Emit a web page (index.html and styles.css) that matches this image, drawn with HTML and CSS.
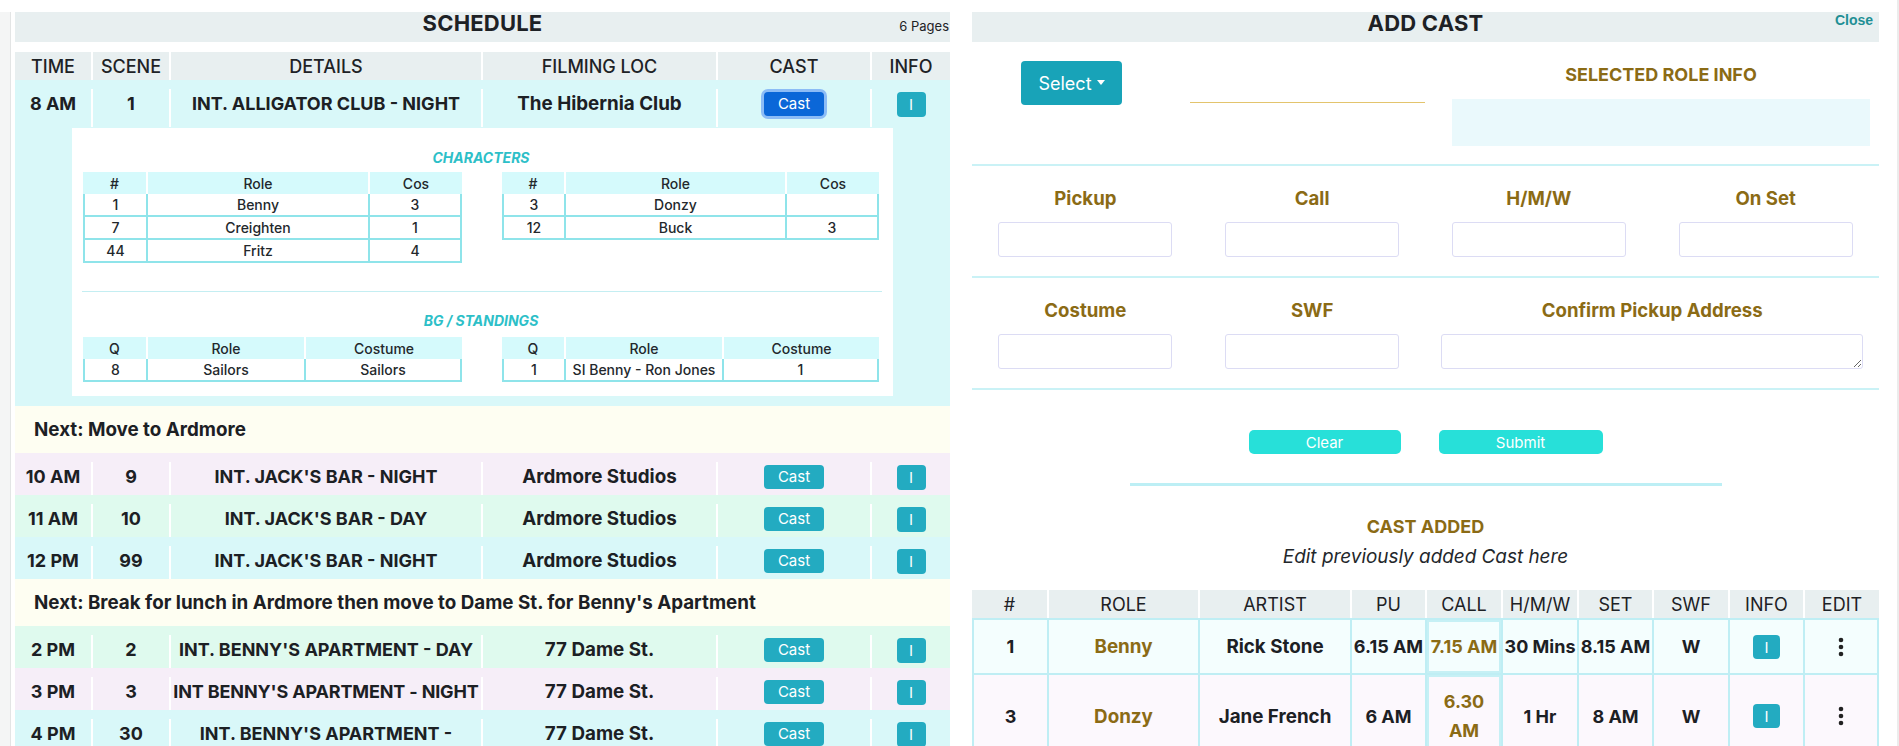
FILE: index.html
```html
<!DOCTYPE html>
<html lang="en">
<head>
<meta charset="utf-8">
<title>Schedule / Add Cast</title>
<link rel="stylesheet" href="styles.css">
</head>
<body>
<div class="page">
  <div class="gutter"></div>

  <section class="schedule">
    <header class="bar">
      <span></span>
      <h1 class="bar-title">SCHEDULE</h1>
      <span class="bar-aside pages">6 Pages</span>
    </header>

    <div class="srow shead">
      <div class="sc">TIME</div>
      <div class="sc">SCENE</div>
      <div class="sc">DETAILS</div>
      <div class="sc">FILMING LOC</div>
      <div class="sc">CAST</div>
      <div class="sc">INFO</div>
    </div>

    <div class="scene cyan">
      <div class="srow sdata open">
        <div class="sc">8 AM</div>
        <div class="sc">1</div>
        <div class="sc">INT. ALLIGATOR CLUB - NIGHT</div>
        <div class="sc loc">The Hibernia Club</div>
        <div class="sc"><button class="btn-cast focused">Cast</button></div>
        <div class="sc"><button class="btn-i">I</button></div>
      </div>
      <div class="details">
        <div class="dbox">
          <h3 class="dtitle">CHARACTERS</h3>
          <div class="dtables">
            <div class="mini chars-l">
              <div class="mh">#</div><div class="mh">Role</div><div class="mh">Cos</div>
              <div class="md">1</div><div class="md">Benny</div><div class="md">3</div>
              <div class="md">7</div><div class="md">Creighten</div><div class="md">1</div>
              <div class="md">44</div><div class="md">Fritz</div><div class="md">4</div>
            </div>
            <div class="mini chars-r">
              <div class="mh">#</div><div class="mh">Role</div><div class="mh">Cos</div>
              <div class="md">3</div><div class="md">Donzy</div><div class="md"></div>
              <div class="md">12</div><div class="md">Buck</div><div class="md">3</div>
            </div>
          </div>
          <hr class="ddiv">
          <h3 class="dtitle bgt">BG / STANDINGS</h3>
          <div class="dtables bgtables">
            <div class="mini bg-l">
              <div class="mh">Q</div><div class="mh">Role</div><div class="mh">Costume</div>
              <div class="md">8</div><div class="md">Sailors</div><div class="md">Sailors</div>
            </div>
            <div class="mini bg-r">
              <div class="mh">Q</div><div class="mh">Role</div><div class="mh">Costume</div>
              <div class="md">1</div><div class="md">SI Benny - Ron Jones</div><div class="md">1</div>
            </div>
          </div>
        </div>
      </div>
    </div>

    <div class="note">Next: Move to Ardmore</div>

    <div class="srow sdata lavender">
      <div class="sc">10 AM</div><div class="sc">9</div><div class="sc">INT. JACK'S BAR - NIGHT</div><div class="sc loc">Ardmore Studios</div>
      <div class="sc"><button class="btn-cast">Cast</button></div><div class="sc"><button class="btn-i">I</button></div>
    </div>
    <div class="srow sdata mint">
      <div class="sc">11 AM</div><div class="sc">10</div><div class="sc">INT. JACK'S BAR - DAY</div><div class="sc loc">Ardmore Studios</div>
      <div class="sc"><button class="btn-cast">Cast</button></div><div class="sc"><button class="btn-i">I</button></div>
    </div>
    <div class="srow sdata cyan">
      <div class="sc">12 PM</div><div class="sc">99</div><div class="sc">INT. JACK'S BAR - NIGHT</div><div class="sc loc">Ardmore Studios</div>
      <div class="sc"><button class="btn-cast">Cast</button></div><div class="sc"><button class="btn-i">I</button></div>
    </div>

    <div class="note">Next: Break for lunch in Ardmore then move to Dame St. for Benny's Apartment</div>

    <div class="srow sdata mint">
      <div class="sc">2 PM</div><div class="sc">2</div><div class="sc">INT. BENNY'S APARTMENT - DAY</div><div class="sc loc">77 Dame St.</div>
      <div class="sc"><button class="btn-cast">Cast</button></div><div class="sc"><button class="btn-i">I</button></div>
    </div>
    <div class="srow sdata lavender">
      <div class="sc">3 PM</div><div class="sc">3</div><div class="sc tight">INT BENNY'S APARTMENT - NIGHT</div><div class="sc loc">77 Dame St.</div>
      <div class="sc"><button class="btn-cast">Cast</button></div><div class="sc"><button class="btn-i">I</button></div>
    </div>
    <div class="srow sdata cyan">
      <div class="sc">4 PM</div><div class="sc">30</div><div class="sc">INT. BENNY'S APARTMENT - NIGHT</div><div class="sc loc">77 Dame St.</div>
      <div class="sc"><button class="btn-cast">Cast</button></div><div class="sc"><button class="btn-i">I</button></div>
    </div>
  </section>

  <section class="addcast">
    <header class="bar">
      <span></span>
      <h1 class="bar-title">ADD CAST</h1>
      <a class="bar-aside close">Close</a>
    </header>

    <div class="sel-row">
      <button class="btn-select">Select<span class="caret"></span></button>
      <input class="sel-line" type="text" aria-label="Role">
      <div class="role-info">
        <h2 class="gold-title">SELECTED ROLE INFO</h2>
        <div class="info-box"></div>
      </div>
    </div>

    <div class="form-row">
      <div class="field"><label class="flabel">Pickup</label><input class="finput" type="text"></div>
      <div class="field"><label class="flabel">Call</label><input class="finput" type="text"></div>
      <div class="field"><label class="flabel">H/M/W</label><input class="finput" type="text"></div>
      <div class="field"><label class="flabel">On Set</label><input class="finput" type="text"></div>
    </div>

    <div class="form-row">
      <div class="field"><label class="flabel">Costume</label><input class="finput" type="text"></div>
      <div class="field"><label class="flabel">SWF</label><input class="finput" type="text"></div>
      <div class="field wide"><label class="flabel">Confirm Pickup Address</label><textarea class="farea"></textarea></div>
    </div>

    <div class="actions">
      <button class="btn-act clear">Clear</button>
      <button class="btn-act submit">Submit</button>
    </div>
    <hr class="thick">

    <h2 class="gold-title added">CAST ADDED</h2>
    <p class="sub">Edit previously added Cast here</p>

    <div class="ctable">
      <div class="ct-row ct-head">
        <div class="cth">#</div><div class="cth">ROLE</div><div class="cth">ARTIST</div><div class="cth">PU</div><div class="cth">CALL</div>
        <div class="cth">H/M/W</div><div class="cth">SET</div><div class="cth">SWF</div><div class="cth">INFO</div><div class="cth">EDIT</div>
      </div>
      <div class="ct-row ct-body first r1">
        <div class="ctd">1</div><div class="ctd gold name">Benny</div><div class="ctd name">Rick Stone</div><div class="ctd">6.15 AM</div><div class="ctd gold hl">7.15 AM</div>
        <div class="ctd">30 Mins</div><div class="ctd">8.15 AM</div><div class="ctd">W</div>
        <div class="ctd"><button class="btn-i">I</button></div>
        <div class="ctd"><svg class="kebab" width="6" height="20" viewBox="0 0 6 20"><circle cx="3" cy="3" r="2.3"/><circle cx="3" cy="10" r="2.3"/><circle cx="3" cy="17" r="2.3"/></svg></div>
      </div>
      <div class="ct-row ct-body r2">
        <div class="ctd">3</div><div class="ctd gold name">Donzy</div><div class="ctd name">Jane French</div><div class="ctd">6 AM</div><div class="ctd gold hl">6.30<br>AM</div>
        <div class="ctd">1 Hr</div><div class="ctd">8 AM</div><div class="ctd">W</div>
        <div class="ctd"><button class="btn-i">I</button></div>
        <div class="ctd"><svg class="kebab" width="6" height="20" viewBox="0 0 6 20"><circle cx="3" cy="3" r="2.3"/><circle cx="3" cy="10" r="2.3"/><circle cx="3" cy="17" r="2.3"/></svg></div>
      </div>
    </div>
  </section>

  <div class="edge"></div>
</div>
</body>
</html>
```

FILE: styles.css
```css
* { box-sizing: border-box; margin: 0; padding: 0; }
html, body { width: 1899px; height: 746px; overflow: hidden; background: #fff; }
body { font-family: Inter, "Liberation Sans", sans-serif; color: #1e2226; }

.page { display: flex; align-items: flex-start; height: 746px; }

.gutter { width: 11px; height: 734px; margin-top: 12px; background: #f4f5f5; border-right: 1px solid #e3e5e5; flex: none; }
.edge { width: 2px; height: 746px; margin-left: auto; background: #ececec; flex: none; }

/* ---------- shared header bar ---------- */
.bar { display: grid; grid-template-columns: 1fr auto 1fr; height: 30px; background: #e8eff0; }
.bar-title { font-size: 22px; font-weight: 700; line-height: 22px; color: #1d2125; letter-spacing: 0.2px; }
.bar-aside { justify-self: end; align-self: start; }
.pages { font-size: 13px; line-height: 16px; padding-top: 6px; padding-right: 1px; color: #1e2226; }
.close { font-family: "Liberation Sans", Arial, sans-serif; font-weight: 700; font-size: 14px; line-height: 16px; color: #1f8f95; padding-right: 6px; cursor: pointer; }

/* ---------- schedule ---------- */
.schedule { width: 935px; margin-left: 4px; padding-top: 12px; flex: none; }

.srow { display: grid; grid-template-columns: 76px 78px 312px 235px 154px 80px; }
.srow .sc + .sc { border-left: 2px solid #fff; }

.shead { margin-top: 10px; height: 28px; }
.shead .sc { background: #e8eff0; display: flex; align-items: center; justify-content: center; font-size: 18px; font-weight: 500; }

.sdata { padding-top: 9px; min-height: 42px; }
.sdata .sc { min-height: 33px; padding: 1px 0 5px; display: flex; align-items: flex-start; justify-content: center; text-align: center; font-size: 18px; font-weight: 700; line-height: 27px; color: #1c2024; }
.sdata .sc.loc { font-size: 18.8px; }
.sdata .sc.tight { letter-spacing: -0.15px; }
.sdata.open { min-height: 47px; }

.cyan { background: #d9f8f9; }
.lavender { background: #f6eef8; }
.mint { background: #dffaee; }

.btn-cast { width: 60px; height: 24px; margin-top: 2px; border: 0; border-radius: 4px; background: #23abc1; color: #fff; font-family: Inter, sans-serif; font-size: 15px; line-height: 24px; letter-spacing: 0; }
.btn-cast.focused { background: #0b67d8; box-shadow: 0 0 0 3px #8cbcf6; }
.btn-i { width: 29px; height: 25px; margin-top: 2px; border: 0; border-radius: 4px; background: #23abc1; color: #fff; font-family: Inter, sans-serif; font-size: 15px; line-height: 25px; }

.details { padding: 1px 57px 10px 57px; }
.dbox { background: #fff; height: 268px; padding: 21px 14px 0 11px; }
.dtitle { font-size: 14px; font-weight: 700; font-style: italic; line-height: 18px; text-align: center; color: #2dbfc8; }
.dtables { display: flex; gap: 40px; margin-top: 5px; }
.ddiv { border: 0; border-top: 1px solid #c4eef2; margin: 28px -3px 0 -1px; }
.bgt { margin-top: 20px; }
.bgtables { margin-top: 7px; }

.mini { display: grid; align-content: start; font-size: 14px; font-weight: 500; color: #23282c; }
.chars-l { grid-template-columns: 63px 222px 94px; }
.chars-r { grid-template-columns: 62px 221px 94px; }
.bg-l { grid-template-columns: 63px 158px 158px; }
.bg-r { grid-template-columns: 62px 158px 157px; }
.mh { height: 22px; background: #d5fafc; display: flex; align-items: center; justify-content: center; }
.mh + .mh { border-left: 2px solid #fff; }
.md { height: 23px; border-left: 2px solid #8fe4ea; border-bottom: 2px solid #8fe4ea; display: flex; align-items: center; justify-content: center; white-space: nowrap; }
.md:nth-child(3n) { border-right: 2px solid #8fe4ea; }

.note { height: 47px; background: #fefef2; display: flex; align-items: center; padding-left: 19px; font-size: 18.8px; font-weight: 700; color: #1c2024; }

/* ---------- add cast ---------- */
.addcast { width: 907px; margin-left: 22px; padding-top: 12px; flex: none; }

.sel-row { display: flex; align-items: flex-start; height: 124px; border-bottom: 2px solid #caf2f6; }
.btn-select { width: 101px; height: 44px; margin: 19px 0 0 49px; border: 0; border-radius: 4px; background: #18a3b8; color: #fff; font-family: Inter, sans-serif; font-size: 18px; display: flex; align-items: center; justify-content: center; gap: 5px; }
.caret { width: 0; height: 0; border-top: 5px solid #fff; border-left: 4px solid transparent; border-right: 4px solid transparent; margin-top: -2px; }
.sel-line { width: 235px; height: 34px; margin: 27px 0 0 68px; border: 0; border-bottom: 1px solid #e3c46d; background: transparent; outline: none; }
.role-info { width: 418px; margin: 22px 0 0 27px; }
.gold-title { font-size: 18px; font-weight: 700; line-height: 22px; text-align: center; color: #8b6b15; }
.info-box { height: 47px; margin-top: 13px; background: #eaf9fc; }

.form-row { display: grid; grid-template-columns: repeat(4, 1fr); padding: 21px 0 19px; border-bottom: 2px solid #caf2f6; }
.field { display: flex; flex-direction: column; align-items: center; }
.field.wide { grid-column: span 2; }
.flabel { font-size: 18.6px; font-weight: 700; line-height: 22px; color: #8b6b15; margin-bottom: 13px; }
.finput { width: 174px; height: 35px; border: 1px solid #dcdcf4; border-radius: 3px; background: #fff; }
.farea { width: 422px; height: 35px; border: 1px solid #dcdcf4; border-radius: 3px; background: #fff; resize: vertical; }

.actions { display: flex; justify-content: center; gap: 38px; padding-top: 40px; }
.btn-act { height: 24px; border: 0; border-radius: 5px; background: #27e0d9; color: #fff; font-family: Inter, sans-serif; font-size: 15px; }
.btn-act.clear { width: 152px; }
.btn-act.submit { width: 164px; }
.thick { width: 592px; margin: 29px auto 0; border: 0; border-top: 3px solid #bdeff5; }

.added { margin-top: 30px; }
.sub { margin-top: 8px; font-size: 18.9px; font-style: italic; line-height: 22px; text-align: center; color: #23272b; }

.ctable { margin-top: 22px; }
.ct-row { display: grid; grid-template-columns: 75px 151px 152px 75px 76px 76px 75px 76px 75px 76px; }
.cth { height: 28px; background: #e8eff0; display: flex; align-items: center; justify-content: center; font-size: 18px; font-weight: 400; color: #1d2125; }
.cth + .cth { border-left: 2px solid #fff; }
.ctd { padding: 12px 1px; border-left: 2px solid #bfeef4; border-bottom: 2px solid #bfeef4; display: flex; align-items: center; justify-content: center; text-align: center; font-size: 18px; font-weight: 700; line-height: 29px; color: #1c2024; white-space: nowrap; }
.ctd.name { font-size: 18.8px; }
.ctd:last-child { border-right: 2px solid #bfeef4; }
.ct-body.first .ctd { border-top: 2px solid #bfeef4; }
.r1 { background: #f4fefe; }
.r2 { background: #fcf8fd; }
.ctd.gold { color: #8b6b15; }
.ctd.hl { box-shadow: inset 0 0 0 2px #c6f0f5; }
.ctd .btn-i { margin-top: 0; width: 27px; height: 24px; }
.kebab { fill: #222; }
```
